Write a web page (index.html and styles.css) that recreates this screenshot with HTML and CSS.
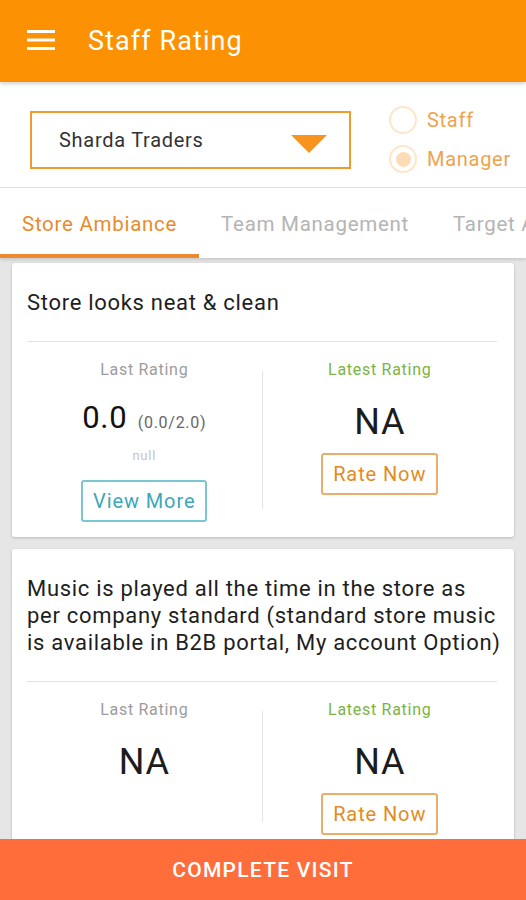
FILE: index.html
```html
<!DOCTYPE html>
<html lang="en">
<head>
    <meta charset="UTF-8">
    <meta name="viewport" content="width=device-width, initial-scale=1.0">
    <title>Staff Rating</title>
    <link rel="stylesheet" href="styles.css">
</head>
<body>
<div class="app">
    <header class="toolbar">
        <svg class="menu-icon" width="28" height="22" viewBox="0 0 28 22">
            <rect x="0" y="1" width="28" height="3" fill="#fff"/>
            <rect x="0" y="9.5" width="28" height="3" fill="#fff"/>
            <rect x="0" y="18" width="28" height="3" fill="#fff"/>
        </svg>
        <h1>Staff Rating</h1>
    </header>

    <div class="filters">
        <div class="store-select">
            <span>Sharda Traders</span>
            <svg width="36" height="18" viewBox="0 0 36 18">
                <polygon points="0,0 36,0 18,18" fill="#f7931e"/>
            </svg>
        </div>
        <div class="role-group">
            <label class="role"><span class="radio"></span>Staff</label>
            <label class="role"><span class="radio checked"></span>Manager</label>
        </div>
    </div>

    <nav class="tabs">
        <div class="tab active">Store Ambiance</div>
        <div class="tab">Team Management</div>
        <div class="tab">Target Achievement</div>
    </nav>

    <main class="content">
        <div class="card">
            <div class="card-title"><p>Store looks neat &amp; clean</p></div>
            <div class="ratings">
                <div class="col">
                    <div class="label">Last Rating</div>
                    <div class="score">0.0 <small>(0.0/2.0)</small></div>
                    <div class="note">null</div>
                    <button class="btn btn-view">View More</button>
                </div>
                <div class="split"></div>
                <div class="col">
                    <div class="label latest">Latest Rating</div>
                    <div class="na">NA</div>
                    <button class="btn btn-rate">Rate Now</button>
                </div>
            </div>
        </div>

        <div class="card">
            <div class="card-title"><p>Music is played all the time in the store as per company standard (standard store music is available in B2B portal, My account Option)</p></div>
            <div class="ratings">
                <div class="col">
                    <div class="label">Last Rating</div>
                    <div class="na">NA</div>
                </div>
                <div class="split"></div>
                <div class="col">
                    <div class="label latest">Latest Rating</div>
                    <div class="na">NA</div>
                    <button class="btn btn-rate">Rate Now</button>
                </div>
            </div>
        </div>
    </main>

    <footer class="complete">COMPLETE VISIT</footer>
</div>
</body>
</html>
```

FILE: styles.css
```css
body {
    margin: 0;
    font-family: Roboto, "Noto Sans", sans-serif;
    letter-spacing: .045em;
    color: #212121;
    background: #e6e6e6;
}

.app {
    height: 900px;
    display: flex;
    flex-direction: column;
    overflow: hidden;
}

.toolbar {
    height: 82px;
    flex-shrink: 0;
    background: #fd9104;
    display: flex;
    align-items: center;
    padding-left: 27px;
    box-shadow: 0 2px 4px rgba(0, 0, 0, .18);
    position: relative;
    z-index: 2;
}

.menu-icon {
    margin-top: -2px;
}

.toolbar h1 {
    margin: 0 0 0 33px;
    font-size: 27px;
    font-weight: 400;
    color: #fff;
    letter-spacing: .04em;
}

.filters {
    height: 105px;
    flex-shrink: 0;
    background: #fff;
    display: flex;
    align-items: center;
    border-bottom: 1px solid #e2e2e2;
}

.store-select {
    margin-left: 30px;
    margin-top: 10px;
    width: 321px;
    height: 58px;
    box-sizing: border-box;
    border: 2px solid #f39a2e;
    display: flex;
    align-items: center;
    justify-content: space-between;
    padding: 0 22px 0 27px;
    font-size: 20px;
    color: #333;
}

.store-select svg {
    margin-top: 8px;
}

.role-group {
    margin-left: 38px;
    display: flex;
    flex-direction: column;
    gap: 11px;
    margin-top: 10px;
}

.role {
    display: flex;
    align-items: center;
    font-size: 20px;
    color: #eea34c;
}

.radio {
    width: 28px;
    height: 28px;
    box-sizing: border-box;
    border: 2px solid #fde6cb;
    border-radius: 50%;
    margin-right: 10px;
    display: flex;
    align-items: center;
    justify-content: center;
}

.radio.checked::after {
    content: "";
    width: 15px;
    height: 15px;
    border-radius: 50%;
    background: #fcdcb6;
}

.tabs {
    height: 70px;
    flex-shrink: 0;
    background: #fff;
    display: flex;
    white-space: nowrap;
    overflow: hidden;
    box-shadow: 0 2px 3px rgba(0, 0, 0, .12);
    position: relative;
    z-index: 1;
}

.tab {
    padding: 6px 22px 0;
    font-size: 20.5px;
    color: #b4b4b4;
    display: flex;
    align-items: center;
    box-sizing: border-box;
    border-bottom: 4px solid transparent;
}

.tab.active {
    color: #e98b2a;
    border-bottom-color: #ec8a32;
}

.content {
    flex: 1;
    padding: 5px 12px 0;
    display: flex;
    flex-direction: column;
    gap: 12px;
    overflow: hidden;
}

.card {
    flex-shrink: 0;
    background: #fff;
    border-radius: 3px;
    box-shadow: 0 1px 3px rgba(0, 0, 0, .2);
    padding: 0 17px 0 15px;
}

.card-title {
    padding: 26px 0 25px;
    border-bottom: 1px solid #e4e4e4;
}

.card-title p {
    margin: 0 -8px 0 0;
    font-size: 22px;
    line-height: 27px;
    letter-spacing: .032em;
    color: #1e1e1e;
}

.ratings {
    display: grid;
    grid-template-columns: 1fr 1px 1fr;
    padding-bottom: 15px;
}

.split {
    background: #e4e4e4;
    margin: 29px 0 13px;
}

.col {
    display: flex;
    flex-direction: column;
    align-items: center;
    padding-top: 18px;
}

.label {
    font-size: 16px;
    line-height: 20px;
    color: #9c9c9c;
}

.label.latest {
    color: #7cb342;
}

.score {
    margin-top: 20px;
    font-size: 31px;
    line-height: 36px;
    height: 36px;
    color: #111;
}

.score small {
    font-size: 16px;
    line-height: 0;
    color: #666;
    margin-left: 2px;
}

.note {
    margin-top: 12px;
    font-size: 13px;
    line-height: 16px;
    color: #c4c4c4;
}

.na {
    margin-top: 21px;
    font-size: 36px;
    line-height: 42px;
    color: #1c1c1c;
}

.btn {
    font-family: inherit;
    letter-spacing: .045em;
    font-size: 20px;
    background: #fff;
    height: 42px;
    border-radius: 3px;
    padding: 0;
    cursor: pointer;
}

.btn-view {
    margin-top: 16px;
    width: 126px;
    border: 2px solid #7cc6d2;
    color: #3aa7bb;
}

.btn-rate {
    margin-top: 10px;
    width: 117px;
    border: 2px solid #eaae6a;
    color: #e38b1f;
}

.complete {
    height: 61px;
    flex-shrink: 0;
    background: #ff6d3b;
    color: #fff;
    font-size: 21px;
    font-weight: 500;
    display: flex;
    align-items: center;
    justify-content: center;
    letter-spacing: .06em;
}
```
